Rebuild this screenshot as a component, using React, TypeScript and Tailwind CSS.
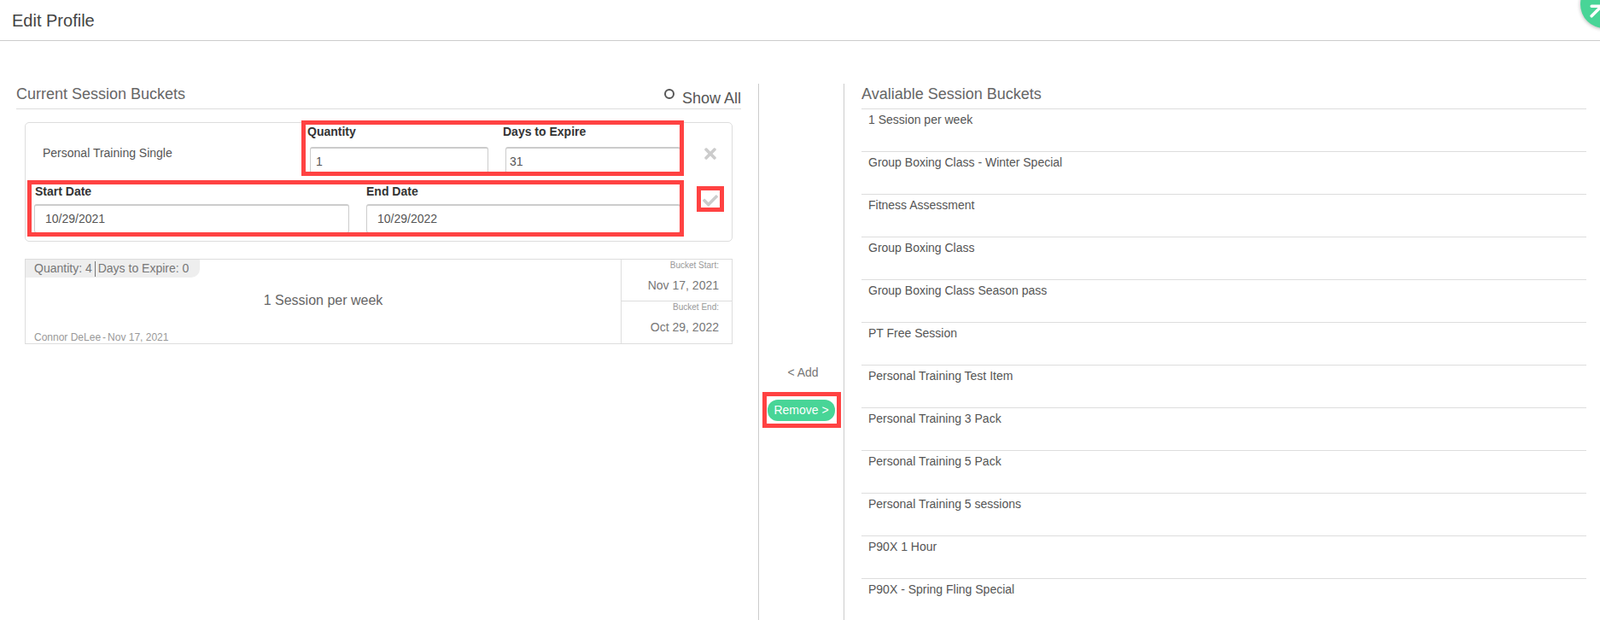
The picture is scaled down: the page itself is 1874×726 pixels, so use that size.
import React from "react";
import { ArrowUpRight } from "lucide-react";
import { FaCheck, FaTimes } from "react-icons/fa";

const availableBuckets = [
  "1 Session per week",
  "Group Boxing Class - Winter Special",
  "Fitness Assessment",
  "Group Boxing Class",
  "Group Boxing Class Season pass",
  "PT Free Session",
  "Personal Training Test Item",
  "Personal Training 3 Pack",
  "Personal Training 5 Pack",
  "Personal Training 5 sessions",
  "P90X 1 Hour",
  "P90X - Spring Fling Special",
];

function RedFrame({ className }: { className: string }) {
  return <div className={`pointer-events-none absolute border-[5px] border-[#ff4242] ${className}`} />;
}

function Field({
  label,
  value,
  className,
  labelClass,
  inputClass,
}: {
  label: string;
  value: string;
  className: string;
  labelClass: string;
  inputClass: string;
}) {
  return (
    <div className={className}>
      <label className={`block text-[14px] leading-[20px] font-bold text-[#333] ${labelClass}`}>{label}</label>
      <input
        readOnly
        value={value}
        className={`block h-[34px] rounded-[3px] border border-t-2 border-[#ccc] bg-white pb-[2px] text-[14px] text-[#555] outline-none ${inputClass}`}
      />
    </div>
  );
}

function DateBlock({ label, value, border }: { label: string; value: string; border?: boolean }) {
  return (
    <div className={`h-[49px] pr-[15px] text-right ${border ? "border-b border-[#ddd]" : ""}`}>
      <p className="pt-[1px] text-[10px] leading-[12px] text-[#999]">{label}</p>
      <p className="mt-[8px] text-[14px] leading-[18px] text-[#777]">{value}</p>
    </div>
  );
}

export default function App() {
  return (
    <div className="relative h-[726px] w-full overflow-hidden bg-white font-['Liberation_Sans',Arial,sans-serif]">
      <header className="flex h-[48px] items-center border-b border-[#ccc] pl-[14px]">
        <h1 className="text-[20px] font-normal text-[#444]">Edit Profile</h1>
      </header>

      <div className="absolute -right-[33px] -top-[23px] flex h-[56px] w-[56px] items-center justify-center rounded-full bg-[#48d597] shadow-[0_1px_4px_rgba(0,0,0,0.3)]">
        <ArrowUpRight className="relative -left-[9px] top-[8px] size-[28px] shrink-0 text-white" strokeWidth={3} />
      </div>

      <main className="flex h-[678px] pt-[50px]">
        {/* current buckets */}
        <section className="w-[889px] shrink-0 border-r border-[#ccc] pl-[19px] pr-[20px]">
          <div className="flex h-[30px] items-start justify-between border-b border-[#ddd]">
            <h2 className="text-[18px] leading-[24px] font-normal text-[#666]">Current Session Buckets</h2>
            <label className="relative flex items-center text-[18px] leading-[24px] text-[#555]">
              <span className="absolute -left-[21px] top-[6px] size-[12px] rounded-full border-[2px] border-[#555]" />
              <span className="relative top-[5px]">Show All</span>
            </label>
          </div>

          <div className="relative mx-[10px] mt-[15px] h-[140px] rounded-[5px] border border-[#ddd]">
            <div className="flex h-[68px]">
              <p className="w-[330px] pl-[20px] pt-[27px] text-[14px] leading-[16px] text-[#555]">Personal Training Single</p>
              <Field label="Quantity" value="1" className="w-[229px]" labelClass="h-[28px]" inputClass="ml-[3px] w-[209px] pl-[6px]" />
              <Field label="Days to Expire" value="31" className="w-[208px]" labelClass="h-[28px]" inputClass="ml-[3px] w-[205px] pl-[4px]" />
              <div className="flex flex-1 items-center justify-center pl-[10px] pt-[4px] text-[#ccc]">
                <FaTimes size={20} />
              </div>
            </div>
            <div className="flex h-[70px]">
              <Field label="Start Date" value="10/29/2021" className="ml-[10px] w-[389px] pt-[2px]" labelClass="h-[25px] pl-[1px]" inputClass="w-[369px] pl-[12px]" />
              <Field label="End Date" value="10/29/2022" className="w-[368px] pt-[2px]" labelClass="h-[25px]" inputClass="w-[368px] pl-[12px]" />
              <div className="flex flex-1 items-start justify-center pl-[10px] pt-[14px] text-[#ccc]">
                <FaCheck size={18} />
              </div>
            </div>
            <RedFrame className="left-[323px] -top-[3px] h-[65px] w-[448px]" />
            <RedFrame className="left-[2px] top-[67px] h-[66px] w-[769px]" />
            <RedFrame className="left-[786px] top-[74px] h-[30px] w-[32px]" />
          </div>

          <div className="mx-[10px] mt-[20px] flex h-[100px] border border-[#ddd]">
            <div className="relative flex-1 border-r border-[#ddd]">
              <div className="flex h-[21px] w-[204px] items-center rounded-br-[10px] bg-[#eee] pl-[10px] text-[14px] text-[#777]">
                <span>Quantity: 4</span>
                <span className="mx-[3px] h-[18px] border-l border-[#777]" />
                <span>Days to Expire: 0</span>
              </div>
              <p className="mt-[17px] text-center text-[16px] leading-[20px] text-[#666]">1 Session per week</p>
              <p className="mt-[25px] flex gap-[2px] pl-[10px] text-[12px] leading-[16px] text-[#999]">
                <span>Connor DeLee</span>
                <span>-</span>
                <span>Nov 17, 2021</span>
              </p>
            </div>
            <div className="w-[129px]">
              <DateBlock label="Bucket Start:" value="Nov 17, 2021" border />
              <DateBlock label="Bucket End:" value="Oct 29, 2022" />
            </div>
          </div>
        </section>

        {/* add / remove */}
        <div className="relative flex w-[100px] shrink-0 flex-col items-center border-r border-[#ccc] pt-[329px]">
          <button type="button" className="ml-[4px] text-[14px] leading-[18px] text-[#777]">
            &lt; Add
          </button>
          <button
            type="button"
            className="mt-[23px] flex h-[25px] w-[79px] items-center justify-center rounded-[12px] bg-[#48d597] text-[14px] text-white"
          >
            Remove &gt;
          </button>
          <RedFrame className="left-[4px] top-[361px] h-[42px] w-[92px]" />
        </div>

        {/* available buckets */}
        <section className="min-w-0 flex-1 pl-[20px] pr-[16px]">
          <div className="h-[30px] border-b border-[#ddd]">
            <h2 className="text-[18px] leading-[24px] font-normal text-[#666]">Avaliable Session Buckets</h2>
          </div>
          {availableBuckets.map((name) => (
            <div key={name} className="h-[50px] border-b border-[#ddd] pl-[8px] pt-[3px] text-[14px] leading-[18px] text-[#555]">
              {name}
            </div>
          ))}
        </section>
      </main>
    </div>
  );
}
